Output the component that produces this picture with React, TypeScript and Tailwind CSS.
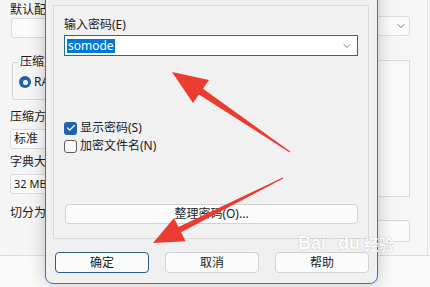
import { ChevronDown, Check } from "lucide-react"

const font = "font-['Segoe_UI','Noto_Sans','Noto_Sans_CJK_SC',sans-serif]"

function Arrow({ points }: { points: string }) {
  return <polygon points={points} fill="#ec3b30" />
}

export default function App() {
  return (
    <div className={`relative w-[430px] h-[287px] overflow-hidden bg-[#f3f3f3] text-[#1b1b1b] ${font}`}>
      {/* 背景：压缩设置窗口 */}
      <div className="flex flex-col h-full">
        <div className="flex h-[265px] bg-gradient-to-r from-[#f6f6f6] via-[#efefef] to-[#f7f7f7]">
          <div className="flex flex-col pl-[10px] w-[140px] text-[12px]">
            <div className="mt-[2px] leading-[16px]">默认配置</div>
            <div className="h-[20px] w-[110px] ml-[1px] border border-[#d9d9d9] bg-[#fbfbfb] rounded-[3px]" />
            <fieldset className="mt-[16px] ml-[2px] w-[110px] border border-[#d6d6d6] rounded-[2px] pl-[6px] pb-[9px]">
              <legend className="px-[1px] leading-[16px]">压缩文件格式</legend>
              <div className="mt-[4px] flex items-center gap-[3px] h-[16px]">
                <span className="w-[12px] h-[12px] rounded-full bg-[#1f63a8] flex items-center justify-center">
                  <span className="w-[5px] h-[5px] rounded-full bg-white" />
                </span>
                <span>RAR</span>
              </div>
            </fieldset>
            <div className="mt-[9px] leading-[16px]">压缩方式</div>
            <div className="mt-[4px] h-[20px] w-[110px] border border-[#dcdcdc] bg-[#fbfbfb] rounded-[3px] pl-[3px] leading-[18px]">标准</div>
            <div className="mt-[5px] leading-[16px]">字典大小</div>
            <div className="mt-[4px] h-[20px] w-[110px] border border-[#dcdcdc] bg-[#fbfbfb] rounded-[3px] pl-[3px] leading-[18px] text-[11px]">32 MB</div>
            <div className="mt-[11px] leading-[16px]">切分为分卷</div>
          </div>
          <div className="ml-auto w-[80px] pr-[17px] flex flex-col items-end">
            <div className="mt-[16px] h-[20px] w-[70px] border border-[#dcdcdc] bg-[#fbfbfb] rounded-[3px] flex items-center justify-end pr-[2px]">
              <ChevronDown className="w-[12px] h-[12px] text-[#555]" strokeWidth={1.5} />
            </div>
            <div className="mt-[24px] h-[137px] w-[70px] border border-[#d9d9d9] bg-[#f9f9f9]" />
            <div className="mt-[23px] h-[22px] w-[70px] border border-[#d9d9d9] bg-[#fbfbfb] rounded-[3px]" />
          </div>
          <div className="w-[2px] mr-[1px] border-l border-[#e2e2e2]" />
        </div>
        <div className="flex-1 border-t border-[#dcdcdc] bg-[#f9f9f9] flex gap-[60px] pl-[80px] pt-[15px] text-[12px] leading-[16px]">
          <span>选项</span>
          <span>高级</span>
          <span>文件</span>
        </div>
      </div>

      {/* 前景：输入密码对话框 */}
      <div className="absolute left-[45px] top-[-20px] w-[333px] h-[304px] border border-[#2f78c0] rounded-b-[8px] bg-[#f0f0f0] shadow-[0_0_16px_rgba(0,0,0,0.22)] flex flex-col text-[12px]">
        <div className="ml-[7px] mt-[24px] w-[316px] h-[234px] border border-[#dadada] bg-[#f1f1f1] flex flex-col pl-[10px]">
          <div className="mt-[11px] leading-[16px]">输入密码(E)</div>
          <div className="mt-[2px] h-[21px] w-[294px] border border-[#24689c] bg-white flex items-center pl-[2px] pr-[4px]">
            <span className="bg-[#0078d7] text-white leading-[14px] px-[1px]">somode</span>
            <ChevronDown className="ml-auto w-[12px] h-[12px] text-[#555]" strokeWidth={1.5} />
          </div>
          <div className="mt-[64px] flex items-center gap-[3px] h-[16px]">
            <span className="w-[13px] h-[13px] rounded-[3px] bg-[#1f64ab] flex items-center justify-center">
              <Check className="w-[10px] h-[10px] text-white" strokeWidth={3} />
            </span>
            <span>显示密码(S)</span>
          </div>
          <div className="mt-[2px] flex items-center gap-[3px] h-[16px]">
            <span className="w-[13px] h-[13px] rounded-[3px] border border-[#5c5c5c] bg-[#fafafa]" />
            <span>加密文件名(N)</span>
          </div>
          <button className="mt-[50px] ml-[1px] h-[20px] w-[293px] border border-[#d3d3d3] rounded-[4px] bg-[#fbfbfb] leading-[18px]">
            整理密码(O)...
          </button>
        </div>
        <div className="mt-[13px] pl-[9px] flex gap-[16px]">
          <button className="h-[21px] w-[94px] border border-[#2a5d86] rounded-[4px] bg-[#fbfbfb]">确定</button>
          <button className="h-[21px] w-[94px] border border-[#d3d3d3] rounded-[4px] bg-[#fbfbfb]">取消</button>
          <button className="h-[21px] w-[94px] border border-[#d3d3d3] rounded-[4px] bg-[#fbfbfb]">帮助</button>
        </div>
      </div>

      {/* 水印 */}
      <div className="absolute left-[298px] top-[234px] flex items-end leading-none text-white text-[18px] font-bold font-['Liberation_Sans','Noto_Sans_CJK_SC',sans-serif] [text-shadow:0_0_1px_rgba(0,0,0,0.35)] opacity-90">
        <span>Bai</span>
        <span className="ml-[12px]">du</span>
        <span className="ml-[4px] text-[15px]">经验</span>
      </div>

      {/* 红色箭头 */}
      <svg className="absolute inset-0" width="430" height="287" viewBox="0 0 430 287">
        <Arrow points="172,72 209,80 203,88.7 290.3,151.6 289.7,152.4 199,94.5 193,103" />
        <Arrow points="153,243 174,218 178.5,226.9 282.8,177.6 283.2,178.4 181.1,232.3 185.6,241.2" />
      </svg>
    </div>
  )
}
